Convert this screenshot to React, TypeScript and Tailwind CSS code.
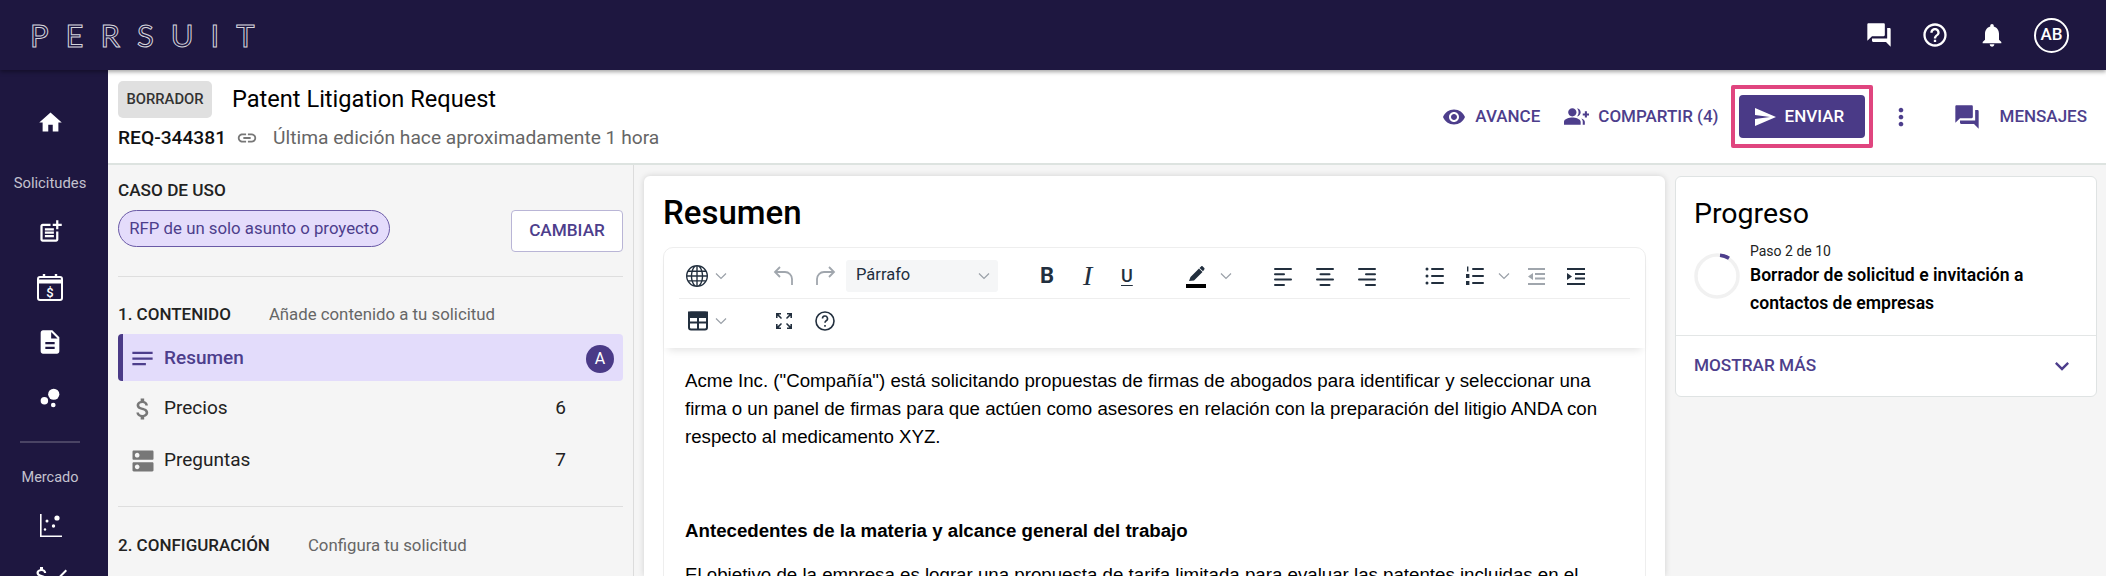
import { BsGlobe } from "react-icons/bs";
import {
  MdAttachMoney,
  MdBubbleChart,
  MdCheck,
  MdDescription,
  MdDns,
  MdExpandMore,
  MdForum,
  MdGroupAdd,
  MdHelpOutline,
  MdHome,
  MdLink,
  MdMoreVert,
  MdNotes,
  MdNotifications,
  MdPostAdd,
  MdSend,
  MdVisibility,
} from "react-icons/md";

const INK = "#222f3e";

function Chevron({ className }: { className: string }) {
  return (
    <svg viewBox="0 0 14 14" className={`h-[14px] w-[14px] shrink-0 ${className}`} fill="none" stroke="#9aa0a8" strokeWidth="1.2">
      <path d="M2 4.5 7 9.5 12 4.5" />
    </svg>
  );
}

// toolbar icons made of plain bars
function Bars({ bars, className, color = INK }: { bars: number[][]; className: string; color?: string }) {
  return (
    <svg viewBox="0 0 24 24" className={`h-6 w-6 shrink-0 ${className}`} fill={color}>
      {bars.map((b, i) => (
        <rect key={i} x={b[0]} y={b[1]} width={b[2]} height={2} rx="1" />
      ))}
    </svg>
  );
}

function CalendarDollar() {
  return (
    <svg viewBox="0 0 28 28" className="mt-[28px] h-7 w-7" fill="none" stroke="white" strokeWidth="2">
      <rect x="2" y="4" width="24" height="23" rx="2" />
      <path d="M2 8.5h24" strokeWidth="4" />
      <path d="M8 1v4M20 1v4" strokeWidth="2.4" />
      <text x="14" y="23.5" textAnchor="middle" fontSize="13" fontFamily="Roboto" fontWeight="500" fill="white" stroke="none">
        $
      </text>
    </svg>
  );
}

function ScatterChart() {
  return (
    <svg viewBox="0 0 28 28" className="mt-[24px] h-7 w-7" fill="white">
      <path d="M4 2h1.6v21.4H26V25H4z" />
      <circle cx="21" cy="6" r="2.6" />
      <circle cx="11" cy="9" r="1.5" />
      <circle cx="17.5" cy="14" r="1.7" />
      <circle cx="9" cy="17.5" r="1.2" />
    </svg>
  );
}

function Sidebar() {
  return (
    <aside className="flex w-[108px] shrink-0 flex-col items-center overflow-hidden bg-[#1e1740] pr-[8px] pt-[39px] text-[#c4c2cf] [&>*]:shrink-0">
      <MdHome className="h-[27px] w-[27px] text-white" />
      <div className="mt-[37px] h-5 text-[14.8px] leading-5">Solicitudes</div>
      <MdPostAdd className="mt-[25px] h-[27px] w-[27px] text-white" />
      <CalendarDollar />
      <MdDescription className="mt-[27px] h-7 w-7 text-white" />
      <MdBubbleChart className="mt-[28px] h-7 w-7 text-white" />
      <div className="mt-[29px] h-[2px] w-[60px] bg-[#4a4464]" />
      <div className="mt-[25px] h-5 text-[14.5px] leading-5">Mercado</div>
      <ScatterChart />
      <div className="mt-[24px] flex items-center text-white">
        <MdAttachMoney className="h-6 w-6" />
        <MdCheck className="-ml-2 h-6 w-6" />
      </div>
    </aside>
  );
}

function TopBar() {
  return (
    <header className="relative z-10 flex h-[70px] shrink-0 items-center bg-[#1e1740] shadow-[0_2px_4px_rgba(0,0,0,0.35)]">
      <div className="ml-[30px] font-['Lato'] text-[31px] font-normal leading-none tracking-[17px] text-transparent [-webkit-text-stroke:1px_#d6d5dd]">
        PERSUIT
      </div>
      <div className="ml-auto flex items-center text-white">
        <MdForum className="h-7 w-7" />
        <MdHelpOutline className="ml-[28px] h-7 w-7" />
        <MdNotifications className="ml-[29px] h-7 w-7" />
        <div className="ml-[28px] mr-[37px] flex h-[35px] w-[35px] items-center justify-center rounded-full border-2 border-white text-[17px] font-medium">
          AB
        </div>
      </div>
    </header>
  );
}

function PageHeader() {
  return (
    <div className="flex h-[95px] shrink-0 items-center border-b-2 border-[#dde3e0] bg-white pl-[10px] pr-[19px]">
      <div className="self-start pt-[11px]">
        <div className="flex items-center">
          <span className="flex h-[37px] w-[94px] items-center justify-center rounded-[5px] bg-[#e0e0e0] text-[14.8px] font-medium text-[#333]">
            BORRADOR
          </span>
          <h1 className="ml-5 text-[23.6px] leading-none text-black">Patent Litigation Request</h1>
        </div>
        <div className="mt-[8px] flex items-center">
          <span className="text-[19.2px] font-medium leading-6 text-[#111]">REQ-344381</span>
          <MdLink className="ml-[10px] h-[22px] w-[22px] text-[#777]" />
          <span className="ml-[15px] text-[19.2px] leading-6 text-[#666]">Última edición hace aproximadamente 1 hora</span>
        </div>
      </div>
      <div className="ml-auto flex items-center text-[17px] font-medium text-[#4d3e8c]">
        <MdVisibility className="h-[24px] w-[24px]" />
        <span className="ml-[9px]">AVANCE</span>
        <MdGroupAdd className="ml-[24px] h-[25px] w-[25px]" />
        <span className="ml-[9px]">COMPARTIR (4)</span>
        <div className="ml-[12px] rounded-[2px] border-[4px] border-[#e0457f] px-[4px] py-[6px]">
          <button className="flex h-[43px] w-[126px] items-center rounded-[4px] bg-[#4a3a87] pl-[14px] text-white">
            <MdSend className="h-6 w-6" />
            <span className="ml-[8px]">ENVIAR</span>
          </button>
        </div>
        <MdMoreVert className="ml-[14px] h-7 w-7" />
        <MdForum className="ml-[38px] h-7 w-7" />
        <span className="ml-[19px]">MENSAJES</span>
      </div>
    </div>
  );
}

function NavRow({ icon, label, count }: { icon: React.ReactNode; label: string; count: string }) {
  return (
    <div className="flex h-[52px] items-center pl-[11px] pt-[3px] text-[19px] text-[#222]">
      {icon}
      <span className="ml-[7px]">{label}</span>
      <span className="ml-auto mr-[57px]">{count}</span>
    </div>
  );
}

function LeftPanel() {
  return (
    <section className="w-[526px] shrink-0 border-r border-[#dcdcdc] px-[10px] pt-[15px]">
      <div className="h-5 text-[17.2px] font-medium leading-5 text-[#222]">CASO DE USO</div>
      <div className="mt-[10px] flex items-start justify-between">
        <span className="flex h-[37px] w-[272px] items-center justify-center rounded-full border border-[#6a5aa6] bg-[#e4dcfb] text-[16.8px] text-[#4d3e8c]">
          RFP de un solo asunto o proyecto
        </span>
        <button className="h-[42px] w-[112px] rounded-[4px] border border-[#b9b5d6] bg-white text-[17.2px] font-medium text-[#4d3e8c]">
          CAMBIAR
        </button>
      </div>
      <div className="mt-[24px] h-px bg-[#dedede]" />
      <div className="mt-[27px] flex h-5 items-center text-[16.8px] leading-5">
        <span className="text-[17px] font-medium text-[#222]">1. CONTENIDO</span>
        <span className="ml-[38px] text-[#666]">Añade contenido a tu solicitud</span>
      </div>
      <div className="mt-[10px] flex h-[47px] items-center rounded-[4px] border-l-[5px] border-[#4a3a87] bg-[#e3dcfb] pl-[6px] pr-[9px] pt-[2px] text-[19px] font-medium text-[#4d3e8c]">
        <MdNotes className="h-[27px] w-[27px]" />
        <span className="ml-[8px]">Resumen</span>
        <span className="ml-auto flex h-7 w-7 items-center justify-center rounded-full bg-[#4a3a87] text-[16px] font-normal text-white">
          A
        </span>
      </div>
      <NavRow icon={<MdAttachMoney className="h-7 w-7 text-[#777]" />} label="Precios" count="6" />
      <NavRow icon={<MdDns className="h-7 w-7 text-[#777]" />} label="Preguntas" count="7" />
      <div className="mt-[21px] h-px bg-[#dedede]" />
      <div className="mt-[28px] flex h-5 items-center text-[16.8px] leading-5">
        <span className="text-[17px] font-medium text-[#222]">2. CONFIGURACIÓN</span>
        <span className="ml-[38px] text-[#666]">Configura tu solicitud</span>
      </div>
    </section>
  );
}

function Toolbar() {
  return (
    <div className="relative z-10 rounded-t-[8px] px-[15px] shadow-[0_6px_8px_-4px_rgba(0,0,0,0.12)]">
      <div className="flex h-[51px] items-center border-b border-[#eeeeee] pl-[7px] pt-[5px]">
        <BsGlobe className="h-[22px] w-[22px] shrink-0 text-[#222f3e]" />
        <Chevron className="ml-[6px]" />
        <svg viewBox="0 0 24 24" className="ml-[44px] h-6 w-6 shrink-0" fill="none" stroke="#a0a6ad" strokeWidth="1.8">
          <path d="M8 3 3 8l5 5M3 8h10a7 7 0 0 1 7 7v6" />
        </svg>
        <svg viewBox="0 0 24 24" className="ml-[17px] h-6 w-6 shrink-0" fill="none" stroke="#a0a6ad" strokeWidth="1.8">
          <path d="M16 3l5 5-5 5M21 8H11a7 7 0 0 0-7 7v6" />
        </svg>
        <div className="ml-[9px] flex h-8 w-[152px] shrink-0 items-center rounded-[3px] bg-[#f5f6f7] pl-[10px] text-[16.5px] text-[#222f3e]">
          Párrafo
          <Chevron className="ml-auto mr-[7px]" />
        </div>
        <span className="ml-[42px] w-[12px] shrink-0 text-[22px] font-bold leading-none text-[#222f3e]">B</span>
        <span className="ml-[31px] w-[10px] shrink-0 font-['Liberation_Serif'] text-[28px] italic leading-none text-[#222f3e]">I</span>
        <span className="ml-[28px] w-[14px] shrink-0 text-[18px] font-medium leading-none text-[#222f3e] underline underline-offset-[3px]">U</span>
        <svg viewBox="0 0 24 24" className="ml-[49px] h-6 w-6 shrink-0">
          <path d="M5 17l1.5-4L15 4.5 18.5 8 10 16.500z M15.500 4l1.600-1.600c.5-.4 1.200-.4 1.600 0l1.600 1.600c.4.4.4 1.100 0 1.600L19 7.200z" fill={INK} />
          <rect x="2" y="20" width="20" height="4" fill="#000" />
        </svg>
        <Chevron className="ml-[11px]" />
        <Bars className="ml-[38px]" bars={[[3, 4, 18], [3, 9.3, 11], [3, 14.6, 18], [3, 20, 11]]} />
        <Bars className="ml-[18px]" bars={[[3, 4, 18], [6.500, 9.3, 11], [3, 14.6, 18], [6.500, 20, 11]]} />
        <Bars className="ml-[18px]" bars={[[3, 4, 18], [10, 9.3, 11], [3, 14.6, 18], [10, 20, 11]]} />
        <svg viewBox="0 0 24 24" className="ml-[44px] h-6 w-6 shrink-0" fill={INK}>
          <circle cx="4" cy="5" r="1.500" />
          <circle cx="4" cy="12" r="1.500" />
          <circle cx="4" cy="19" r="1.500" />
          <rect x="8" y="4" width="13" height="2" rx="1" />
          <rect x="8" y="11" width="13" height="2" rx="1" />
          <rect x="8" y="18" width="13" height="2" rx="1" />
        </svg>
        <svg viewBox="0 0 24 24" className="ml-[16px] h-6 w-6 shrink-0" fill={INK}>
          <rect x="4" y="2.500" width="1.400" height="5" />
          <rect x="3" y="10" width="3.400" height="4" />
          <rect x="3" y="17" width="3.400" height="4" />
          <rect x="9" y="4" width="12" height="2" rx="1" />
          <rect x="9" y="11" width="12" height="2" rx="1" />
          <rect x="9" y="18" width="12" height="2" rx="1" />
        </svg>
        <Chevron className="ml-[10px]" />
        <svg viewBox="0 0 24 24" className="ml-[13px] h-6 w-6 shrink-0" fill="#a0a6ad">
          <rect x="4" y="4" width="17" height="2" />
          <rect x="11" y="9" width="10" height="2" />
          <rect x="11" y="13.500" width="10" height="2" />
          <rect x="4" y="19" width="17" height="2" />
          <path d="M9 9v7l-5-3.500z" />
        </svg>
        <svg viewBox="0 0 24 24" className="ml-[16px] h-6 w-6 shrink-0" fill={INK}>
          <rect x="3" y="4" width="18" height="2" />
          <rect x="11" y="9" width="10" height="2" />
          <rect x="11" y="13.500" width="10" height="2" />
          <rect x="3" y="19" width="18" height="2" />
          <path d="M3 9v7l5-3.500z" />
        </svg>
      </div>
      <div className="flex h-[49px] items-center pb-[6px] pl-[7px]">
        <svg viewBox="0 0 24 24" className="h-6 w-6 shrink-0" fill="none" stroke={INK} strokeWidth="2">
          <rect x="3" y="3.500" width="18" height="17" rx="2" />
          <path d="M3 13.500h18M12 8v12" />
          <rect x="3" y="3.500" width="18" height="4.500" fill={INK} />
        </svg>
        <Chevron className="ml-[4px]" />
        <svg viewBox="0 0 24 24" className="ml-[44px] h-6 w-6 shrink-0" fill={INK}>
          <path d="M4 4h5v1.600H6.700L10 9l-1 1-3.400-3.300V9H4zM20 4v5h-1.600V6.700L15 10l-1-1 3.300-3.400H15V4zM4 20v-5h1.600v2.300L9 14l1 1-3.300 3.400H9V20zM20 20h-5v-1.600h2.300L14 15l1-1 3.400 3.300V15H20z" />
        </svg>
        <svg viewBox="0 0 24 24" className="ml-[17px] h-6 w-6 shrink-0" fill="none" stroke={INK} strokeWidth="1.600">
          <circle cx="12" cy="12" r="9" />
          <path d="M9.500 9.500a2.500 2.500 0 1 1 3.700 2.200c-.8.500-1.200 1-1.200 2" />
          <path d="M12 16v1.800" />
        </svg>
      </div>
    </div>
  );
}

function MainCard() {
  return (
    <section className="ml-[10px] mt-[11px] w-[1021px] shrink-0 rounded-t-[6px] bg-white px-[19px] shadow-[0_0_6px_rgba(0,0,0,0.15)]">
      <h2 className="mt-[17px] h-[40px] text-[33px] font-medium leading-[40px] text-black">Resumen</h2>
      <div className="mt-[14px] rounded-t-[10px] border border-[#eeeeee]">
        <Toolbar />
        <div className="pl-[21px] pr-[20px] pt-[19px] font-['Liberation_Sans'] text-[18.7px] leading-[28px] text-black">
          <p>
            Acme Inc. ("Compañía") está solicitando propuestas de firmas de abogados para identificar y seleccionar una firma o un panel de firmas para que actúen como asesores en relación con la preparación del litigio ANDA con respecto al medicamento XYZ.
          </p>
          <p className="mt-[19px]">&nbsp;</p>
          <p className="mt-[19px] font-bold">Antecedentes de la materia y alcance general del trabajo</p>
          <p className="mt-[16px] h-[28px] overflow-hidden">
            El objetivo de la empresa es lograr una propuesta de tarifa limitada para evaluar las patentes incluidas en el
          </p>
        </div>
      </div>
    </section>
  );
}

function ProgressCard() {
  return (
    <section className="ml-[10px] mt-[11px] h-[221px] w-[422px] shrink-0 rounded-[6px] border border-[#dfe3e3] bg-white">
      <h2 className="ml-[18px] mt-[19px] h-9 text-[28.500px] leading-9 text-black">Progreso</h2>
      <div className="ml-[18px] mt-[9px] flex items-start">
        <svg viewBox="0 0 46 46" className="mt-[12px] h-[46px] w-[46px]" fill="none" strokeWidth="3.500">
          <circle cx="23" cy="23" r="21" stroke="#f1f1f1" />
          <path d="M26 2.200a21 21 0 0 1 9 3" stroke="#4d3e8c" />
        </svg>
        <div className="ml-[10px]">
          <div className="text-[14px] leading-5 text-[#222]">Paso 2 de 10</div>
          <div className="w-[320px] text-[17.600px] font-semibold leading-[28px] text-black">
            Borrador de solicitud e invitación a contactos de empresas
          </div>
        </div>
      </div>
      <div className="mt-[18px] flex h-[60px] items-center border-t border-[#e3e6e6] pl-[18px] pr-[20px] text-[17.200px] font-medium text-[#4d3e8c]">
        MOSTRAR MÁS
        <MdExpandMore className="ml-auto h-7 w-7" />
      </div>
    </section>
  );
}

export default function App() {
  return (
    <div className="flex h-[576px] w-[2106px] flex-col overflow-hidden bg-[#f5f5f5] font-['Roboto',sans-serif]">
      <TopBar />
      <div className="flex min-h-0 flex-1">
        <Sidebar />
        <div className="flex min-w-0 flex-1 flex-col">
          <PageHeader />
          <div className="flex min-h-0 flex-1">
            <LeftPanel />
            <MainCard />
            <ProgressCard />
          </div>
        </div>
      </div>
    </div>
  );
}
